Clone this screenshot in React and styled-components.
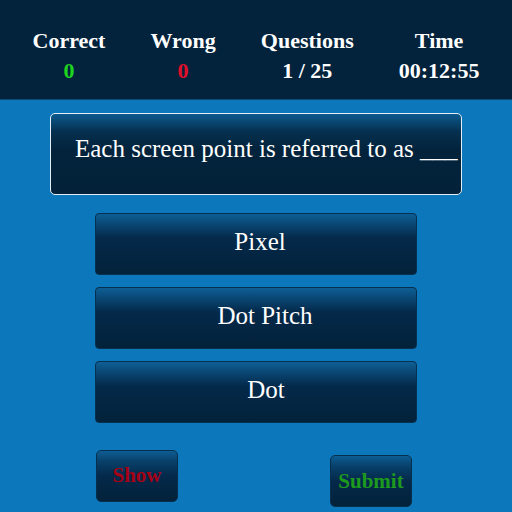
import React from 'react'
import styled, { createGlobalStyle } from 'styled-components'

const serif = "'Liberation Serif', 'Times New Roman', serif"

const GlobalStyle = createGlobalStyle`
  html, body {
    margin: 0;
    padding: 0;
    background: #0d77bc;
    font-family: ${serif};
  }
`

const Page = styled.div`
  width: 512px;
  height: 512px;
  background: #0d77bc;
  overflow: hidden;
  font-family: ${serif};
`

const ScoreBar = styled.div`
  display: flex;
  justify-content: space-around;
  align-items: flex-start;
  height: 100px;
  padding: 0 10px;
  box-sizing: border-box;
  background: #03223b;
  border-bottom: 1px solid #0a4a74;
`

const Stat = styled.div`
  display: flex;
  flex-direction: column;
  align-items: center;
  padding-top: 27px;
  color: #fff;
  font-weight: 700;
  font-size: 22px;
`

const StatLabel = styled.span`
  line-height: 28px;
`

const StatValue = styled.span`
  line-height: 32px;
  color: ${(p) => p.color || '#fff'};
`

const Body = styled.div`
  display: flex;
  flex-direction: column;
  align-items: center;
  padding-top: 13px;
`

const Question = styled.div`
  width: 412px;
  height: 82px;
  box-sizing: border-box;
  display: flex;
  align-items: center;
  padding: 0 0 10px 24px;
  border: 1px solid #e6eef5;
  border-radius: 5px;
  background: linear-gradient(to bottom, #0b5a8e 0%, #05304f 22%, #03233c 45%, #03223a 100%);
  color: #fff;
  font-size: 25px;
  white-space: nowrap;
`

const Options = styled.div`
  display: flex;
  flex-direction: column;
  gap: 12px;
  margin-top: 18px;
`

const Option = styled.button`
  width: 322px;
  height: 62px;
  border: 1px solid #06304f;
  border-radius: 4px;
  background: linear-gradient(to bottom, #0e5f96 0%, #0a4a78 15%, #04294a 40%, #03223a 100%);
  color: #fff;
  font-family: ${serif};
  font-size: 25px;
  padding: 0 0 4px ${(p) => p.indent || 10}px;
  cursor: pointer;
`

const Actions = styled.div`
  display: flex;
  justify-content: space-between;
  align-items: flex-start;
  width: 322px;
  margin-top: 27px;
  padding: 0 5px 0 1px;
  box-sizing: border-box;
`

const ActionButton = styled.button`
  width: 82px;
  height: 52px;
  margin-top: ${(p) => p.offset || 0}px;
  border: 1px solid #062f4d;
  border-radius: 5px;
  background: linear-gradient(to bottom, #0d5d94 0%, #08416b 20%, #04294a 50%, #03223a 100%);
  color: ${(p) => p.color};
  font-family: ${serif};
  font-weight: 700;
  font-size: 21px;
  padding: 0 0 ${(p) => (p.offset ? 0 : 2)}px;
  cursor: pointer;
`

export default function App() {
  return (
    <Page>
      <GlobalStyle />
      <ScoreBar>
        <Stat>
          <StatLabel>Correct</StatLabel>
          <StatValue color="#1fd41f">0</StatValue>
        </Stat>
        <Stat>
          <StatLabel>Wrong</StatLabel>
          <StatValue color="#e0102a">0</StatValue>
        </Stat>
        <Stat>
          <StatLabel>Questions</StatLabel>
          <StatValue>1 / 25</StatValue>
        </Stat>
        <Stat>
          <StatLabel>Time</StatLabel>
          <StatValue>00:12:55</StatValue>
        </Stat>
      </ScoreBar>
      <Body>
        <Question>Each screen point is referred to as ___</Question>
        <Options>
          <Option indent={8}>Pixel</Option>
          <Option indent={18}>Dot Pitch</Option>
          <Option indent={20}>Dot</Option>
        </Options>
        <Actions>
          <ActionButton color="#a50016">Show</ActionButton>
          <ActionButton color="#1e9a1e" offset={5}>Submit</ActionButton>
        </Actions>
      </Body>
    </Page>
  )
}
